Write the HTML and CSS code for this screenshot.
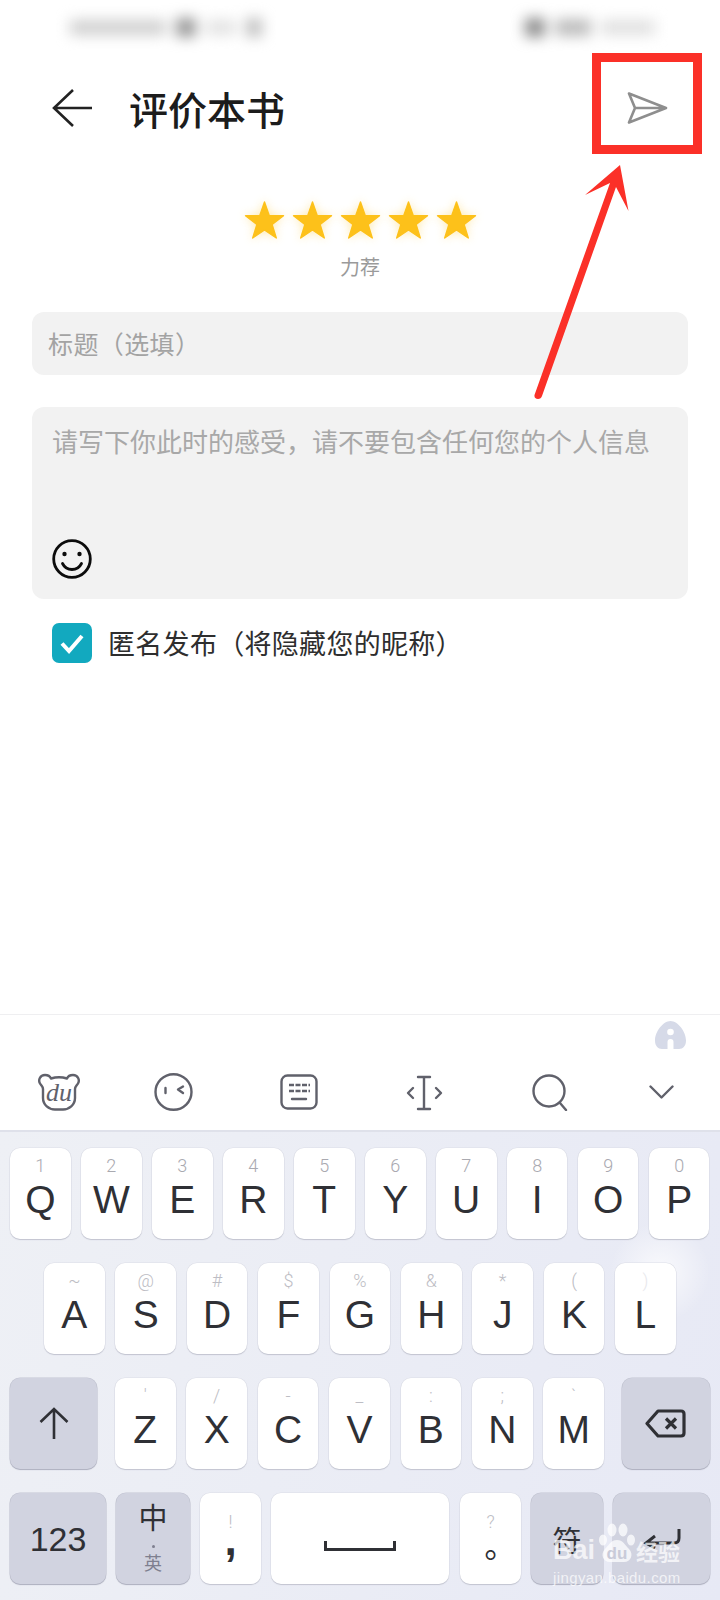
FILE: index.html
```html
<!DOCTYPE html>
<html lang="zh-CN">
<head>
    <meta charset="UTF-8">
    <meta name="viewport" content="width=device-width, initial-scale=1.0">
    <title>评价本书</title>
    <link rel="stylesheet" href="styles.css">
</head>
<body>
<div class="page">

    <!-- status bar, blurred in the source -->
    <div class="status">
        <div class="status-group">
            <span class="blob blob-a"></span><span class="blob blob-b"></span><span class="blob blob-c"></span><span class="blob blob-d"></span>
        </div>
        <div class="status-group">
            <span class="blob blob-e"></span><span class="blob blob-f"></span><span class="blob blob-g"></span>
        </div>
    </div>

    <header class="header">
        <svg class="back" viewBox="0 0 40 38"><path d="M21 1 2 19l19 18M2 19h38"/></svg>
        <h1 class="title">评价本书</h1>
        <svg class="send" viewBox="0 0 41 32"><path d="M2 1.5 39 16 2 30.500 8 16zM8 16h31"/></svg>
    </header>

    <section class="rating">
        <div class="stars">
            <svg class="star" viewBox="0 0 41 40"><path d="M20.500 2 25.200 15.500 39.500 15.800 28.100 24.500 32.300 38 20.500 30 8.700 38 12.900 24.500 1.500 15.800 15.800 15.500z"/></svg>
            <svg class="star" viewBox="0 0 41 40"><path d="M20.500 2 25.200 15.500 39.500 15.800 28.100 24.500 32.300 38 20.500 30 8.700 38 12.900 24.500 1.500 15.800 15.800 15.500z"/></svg>
            <svg class="star" viewBox="0 0 41 40"><path d="M20.500 2 25.200 15.500 39.500 15.800 28.100 24.500 32.300 38 20.500 30 8.700 38 12.900 24.500 1.500 15.800 15.800 15.500z"/></svg>
            <svg class="star" viewBox="0 0 41 40"><path d="M20.500 2 25.200 15.500 39.500 15.800 28.100 24.500 32.300 38 20.500 30 8.700 38 12.900 24.500 1.500 15.800 15.800 15.500z"/></svg>
            <svg class="star" viewBox="0 0 41 40"><path d="M20.500 2 25.200 15.500 39.500 15.800 28.100 24.500 32.300 38 20.500 30 8.700 38 12.900 24.500 1.500 15.800 15.800 15.500z"/></svg>
        </div>
        <div class="rating-label">力荐</div>
    </section>

    <div class="field-title">标题（选填）</div>

    <div class="field-body">
        <div class="body-hint">请写下你此时的感受，请不要包含任何您的个人信息</div>
        <svg class="smile" viewBox="0 0 40 40">
            <circle cx="20" cy="20" r="18.300"/>
            <circle class="eye" cx="12.500" cy="15" r="2.200"/>
            <circle class="eye" cx="27.500" cy="15" r="2.200"/>
            <path d="M10.500 24.500c2 4 5.500 6 9.500 6s7.500-2 9.500-6"/>
        </svg>
    </div>

    <div class="anon">
        <span class="checkbox"><svg viewBox="0 0 40 40"><path d="M10 20.500 17 28 30 13"/></svg></span>
        <span class="anon-text">匿名发布（将隐藏您的昵称）</span>
    </div>

    <!-- keyboard -->
    <div class="ime">
        <div class="ime-hint">
            <svg class="hint-icon" viewBox="0 0 31 28"><path class="hint-fill" d="M15.500 0C23 0 31 11 31 19.500 31 25 28 28 24 28h-5.500V21q0-3-3-3t-3 3v7H7c-4 0-7-3-7-8.500C0 11 8 0 15.500 0z"/><circle class="hint-hole" cx="15.500" cy="11" r="3.300"/></svg>
        </div>
        <div class="tools">
            <svg class="tool tool-du" viewBox="0 0 42 38">
                <path d="M7 2C2 2 0 7 2 10.500 3.500 13 5 13.500 5 16v9c0 7 6 11.500 12 11.500h8c6 0 12-4.500 12-11.500v-9c0-2.500 1.500-3 3-5.500C42 7 40 2 35 2c-3 0-5 1-6 3.500-5-1.500-11-1.500-16 0C12 3 10 2 7 2z"/>
                <text class="du-text" x="21" y="28" text-anchor="middle">du</text>
            </svg>
            <svg class="tool tool-face" viewBox="0 0 39 38">
                <ellipse cx="19.500" cy="19" rx="18" ry="17.800"/>
                <path d="M11.500 15v5M29 13.500 24 16.500 29 20"/>
            </svg>
            <svg class="tool tool-kb" viewBox="0 0 38 36">
                <rect x="1.500" y="1.500" width="35" height="33" rx="6"/>
                <path class="kb-keys" d="M9 11h5M15.500 11h5M22 11h5M28.500 11h1.500M9 17h5M15.500 17h5M22 17h5M28.500 17h1.500"/>
                <path d="M12 25h14"/>
            </svg>
            <svg class="tool tool-cursor" viewBox="0 0 39 36">
                <path d="M13 2h12M19 2v32M13 34h12M8 13 3 18l5 5M31 13l5 5-5 5"/>
            </svg>
            <svg class="tool tool-search" viewBox="0 0 37 37">
                <circle cx="17" cy="17" r="15.500"/>
                <path d="M28 29l6 7"/>
            </svg>
            <svg class="tool tool-down" viewBox="0 0 25 14"><path d="M1.500 1.500 12.500 12.500 23.500 1.500"/></svg>
        </div>

        <div class="keyboard">
            <div class="row">
                <div class="key"><span class="sub">1</span><span class="letter">Q</span></div>
                <div class="key"><span class="sub">2</span><span class="letter">W</span></div>
                <div class="key"><span class="sub">3</span><span class="letter">E</span></div>
                <div class="key"><span class="sub">4</span><span class="letter">R</span></div>
                <div class="key"><span class="sub">5</span><span class="letter">T</span></div>
                <div class="key"><span class="sub">6</span><span class="letter">Y</span></div>
                <div class="key"><span class="sub">7</span><span class="letter">U</span></div>
                <div class="key"><span class="sub">8</span><span class="letter">I</span></div>
                <div class="key"><span class="sub">9</span><span class="letter">O</span></div>
                <div class="key"><span class="sub">0</span><span class="letter">P</span></div>
            </div>
            <div class="row row-home">
                <div class="key"><span class="sub sub-sym">~</span><span class="letter">A</span></div>
                <div class="key"><span class="sub sub-sym">@</span><span class="letter">S</span></div>
                <div class="key"><span class="sub sub-sym">#</span><span class="letter">D</span></div>
                <div class="key"><span class="sub sub-sym">$</span><span class="letter">F</span></div>
                <div class="key"><span class="sub sub-sym">%</span><span class="letter">G</span></div>
                <div class="key"><span class="sub sub-sym">&amp;</span><span class="letter">H</span></div>
                <div class="key"><span class="sub sub-sym">*</span><span class="letter">J</span></div>
                <div class="key"><span class="sub sub-sym">(</span><span class="letter">K</span></div>
                <div class="key"><span class="sub sub-sym sub-faint">)</span><span class="letter">L</span></div>
            </div>
            <div class="row row-shift">
                <div class="key key-dark key-shift">
                    <svg class="shift-icon" viewBox="0 0 30 33"><path d="M15 32V2M1.500 15 15 2l13.500 13"/></svg>
                </div>
                <div class="key"><span class="sub sub-sym">'</span><span class="letter">Z</span></div>
                <div class="key"><span class="sub sub-sym">/</span><span class="letter">X</span></div>
                <div class="key"><span class="sub sub-sym">-</span><span class="letter">C</span></div>
                <div class="key"><span class="sub sub-sym">_</span><span class="letter">V</span></div>
                <div class="key"><span class="sub sub-sym">:</span><span class="letter">B</span></div>
                <div class="key"><span class="sub sub-sym">;</span><span class="letter">N</span></div>
                <div class="key"><span class="sub sub-sym">`</span><span class="letter">M</span></div>
                <div class="key key-dark key-back">
                    <svg class="back-icon" viewBox="0 0 41 29"><path d="M13 2h23q3 0 3 3v19q0 3-3 3H13L2 14.500z"/><path d="M21 9.500l10 10M31 9.500l-10 10"/></svg>
                </div>
            </div>
            <div class="row row-bottom">
                <div class="key key-dark key-num">123</div>
                <div class="key key-dark key-lang">
                    <span class="lang-zh">中</span>
                    <span class="lang-dot"></span>
                    <span class="lang-en">英</span>
                </div>
                <div class="key key-punct"><span class="sub sub-sym">!</span><span class="comma">,</span></div>
                <div class="key key-space">
                    <svg class="space-icon" viewBox="0 0 72 10"><path d="M1.500 0v8.500h69V0"/></svg>
                </div>
                <div class="key key-punct"><span class="sub sub-sym">?</span><span class="period">。</span></div>
                <div class="key key-dark key-sym">符</div>
                <div class="key key-dark key-enter">
                    <svg class="enter-icon" viewBox="0 0 38 20"><path d="M36 0v9q0 5-5 5H3M12 7 3 14l9 5"/></svg>
                </div>
            </div>
        </div>
    </div>

    <!-- annotations on top of the screenshot -->
    <div class="mark"></div>
    <svg class="mark-arrow" viewBox="530 160 105 245"><path d="M620 165 585 195 610 183 534.500 395Q534 399 538 399 541 399 542 396L616 187 628.500 211z"/></svg>

    <div class="watermark">
        <div class="wm-top">
            <span class="wm-bai">Bai</span>
            <svg class="wm-paw" viewBox="0 0 36 40">
                <ellipse cx="4" cy="17" rx="4" ry="5.500"/>
                <ellipse cx="13" cy="7" rx="4.500" ry="6.500"/>
                <ellipse cx="24" cy="7" rx="4.500" ry="6.500"/>
                <ellipse cx="32" cy="17" rx="4" ry="5.500"/>
                <path d="M18 17c6 0 8 5 12 9 5 5 2 13-5 13H11c-7 0-10-8-5-13 4-4 6-9 12-9z"/>
                <text class="wm-du" x="18" y="36" text-anchor="middle">du</text>
            </svg>
            <span class="wm-cn">经验</span>
        </div>
        <div class="wm-url">jingyan.baidu.com</div>
    </div>
</div>
</body>
</html>
```

FILE: styles.css
```css
* { margin: 0; padding: 0; box-sizing: border-box; }
body {
    background: #fff;
    font-family: "Noto Sans CJK SC", "Noto Sans", sans-serif;
}
svg { display: block; fill: none; }
.page {
    position: relative;
    width: 720px;
    height: 1600px;
    overflow: hidden;
    display: flex;
    flex-direction: column;
    background: #fff;
}

/* status bar */
.status {
    height: 54px;
    padding: 18px 65px 0 70px;
    display: flex;
    justify-content: space-between;
    filter: blur(7px);
}
.status-group { display: flex; gap: 10px; align-items: center; height: 19px; }
.blob { display: block; height: 15px; background: #cfcfcf; }
.blob-a { width: 96px; }
.blob-b { width: 20px; height: 19px; background: #989898; }
.blob-c { width: 30px; background: #e2e2e2; }
.blob-d { width: 16px; height: 19px; background: #c0c0c0; }
.blob-e { width: 20px; height: 19px; background: #8c8c8c; }
.blob-f { width: 36px; height: 17px; background: #bcbcbc; }
.blob-g { width: 54px; background: #e0e0e0; }

/* header */
.header {
    height: 108px;
    padding: 0 52px;
    display: flex;
    align-items: center;
}
.back { width: 40px; height: 38px; stroke: #222; stroke-width: 2.6; }
.title {
    margin-left: 37px;
    font-size: 39px;
    line-height: 50px;
    font-weight: 500;
    color: #1c1c1c;
}
.send {
    width: 41px;
    height: 32px;
    margin-left: auto;
    stroke: #8e8e8e;
    stroke-width: 2.6;
    stroke-linejoin: round;
}

/* rating */
.rating { margin-top: 38px; }
.stars { display: flex; justify-content: center; gap: 7px; }
.star {
    width: 41px;
    height: 40px;
    fill: #fdc11a;
    stroke: #fdc11a;
    stroke-width: 1.4;
    stroke-linejoin: round;
    filter: drop-shadow(0 0 5px rgba(253, 191, 20, 0.35));
}
.rating-label {
    margin-top: 17px;
    font-size: 20px;
    line-height: 20px;
    text-align: center;
    color: #9a9a9a;
}

/* form */
.field-title {
    margin: 35px 32px 0;
    height: 63px;
    padding-left: 16px;
    border-radius: 12px;
    background: #f2f2f2;
    font-size: 25px;
    line-height: 63px;
    letter-spacing: 0.4px;
    color: #a3a3a3;
}
.field-body {
    margin: 32px 32px 0;
    height: 192px;
    padding: 14px 20px 20px;
    border-radius: 12px;
    background: #f2f2f2;
    display: flex;
    flex-direction: column;
    justify-content: space-between;
}
.body-hint { font-size: 26px; line-height: 40px; color: #a8a8a8; white-space: nowrap; }
.smile { width: 40px; height: 40px; stroke: #0c0c0c; stroke-width: 2.8; stroke-linecap: round; }
.smile .eye { fill: #0c0c0c; stroke: none; }
.anon {
    margin: 24px 52px 0;
    height: 40px;
    display: flex;
    align-items: center;
    gap: 16px;
}
.checkbox {
    width: 40px;
    height: 40px;
    border-radius: 7px;
    background: #12a9bf;
}
.checkbox svg { stroke: #fff; stroke-width: 4; }
.anon-text { font-size: 27px; line-height: 40px; letter-spacing: 0.3px; color: #2e2e2e; white-space: nowrap; }

/* keyboard */
.ime {
    margin-top: auto;
    height: 586px;
    display: flex;
    flex-direction: column;
    border-top: 1px solid #efeff1;
}
.ime-hint { height: 33px; padding: 6px 34px 0 0; display: flex; justify-content: flex-end; }
.hint-icon { width: 31px; height: 28px; }
.hint-fill { fill: #d6dae8; }
.hint-hole { fill: #fff; }
.tools {
    margin-top: 25px;
    height: 38px;
    padding-left: 38px;
    display: grid;
    grid-template-columns: 116px 126px 125px 127px 117px 25px;
}
.tool { stroke: #60616b; stroke-width: 2.4; stroke-linecap: round; stroke-linejoin: round; }
.tool-du { width: 42px; height: 38px; }
.du-text {
    font-family: "Liberation Serif", serif;
    font-style: italic;
    font-size: 26px;
    fill: #60616b;
    stroke: none;
}
.tool-face { width: 39px; height: 38px; }
.tool-kb { width: 38px; height: 36px; margin-top: 1px; }
.kb-keys { stroke-width: 2.4; stroke-linecap: butt; }
.tool-cursor { width: 39px; height: 36px; margin-top: 2px; }
.tool-search { width: 37px; height: 37px; margin-top: 1px; }
.tool-down { width: 25px; height: 14px; margin-top: 12px; }

.keyboard {
    flex: 1;
    margin-top: 19px;
    padding: 16px 10px 0;
    border-top: 2px solid #dfe1ea;
    background:
        radial-gradient(circle 50px at 660px 140px, rgba(255, 255, 255, 0.75), rgba(255, 255, 255, 0)),
        linear-gradient(105deg, #eef0f5, #e7e9f5);
    display: flex;
    flex-direction: column;
    gap: 24px;
    font-family: "Liberation Sans", "Noto Sans CJK SC", sans-serif;
}
.row { display: flex; gap: 10.4px; height: 91px; }
.row-home { padding-left: 34px; gap: 10.8px; }
.row-shift { gap: 10.8px; }
.key {
    width: 60.6px;
    height: 91px;
    border-radius: 10px;
    background: #fff;
    box-shadow: 0 1px 1px #c2c4d0, 0 0 0 0.5px #dcdee7;
    display: flex;
    flex-direction: column;
    align-items: center;
    color: #2f3035;
}
.sub {
    margin-top: 9px;
    font-family: Roboto, sans-serif;
    font-weight: 300;
    font-size: 18px;
    line-height: 18px;
    color: #a9a9b0;
}
.sub-sym { color: #bdbdc4; }
.sub-faint { color: #e8e8ec; }
.letter { margin-top: 4.500px; font-size: 39px; line-height: 40px; }

.key-dark {
    background: #d1d3e0;
    box-shadow: 0 1px 1px #aeb0bf, 0 0 0 0.5px #c4c6d3;
    justify-content: center;
}
.key-shift { width: 87px; margin-right: 7.200px; }
.key-back { width: 88px; margin-left: 7.200px; }
.shift-icon { width: 30px; height: 33px; stroke: #2f3035; stroke-width: 2.6; }
.back-icon { width: 41px; height: 29px; stroke: #2f3035; stroke-width: 3.2; stroke-linejoin: round; }

.row-bottom { gap: 10px; }
.key-num { width: 96px; font-size: 34px; line-height: 40px; }
.key-lang { width: 74px; justify-content: flex-start; }
.lang-zh { margin-top: 11px; font-size: 29px; line-height: 31px; }
.lang-dot { width: 3px; height: 3px; margin-top: 10px; border-radius: 50%; background: #7e7f8f; }
.lang-en { margin-top: 6px; font-size: 18px; line-height: 20px; color: #7e7f8f; }
.key-punct { width: 61px; }
.key-punct .sub { margin-top: 20px; }
.comma { margin-top: -9px; font-size: 44px; font-weight: 700; line-height: 36px; }
.period {
    margin-top: 4px;
    font-family: "Noto Sans CJK TC", sans-serif;
    font-size: 32px;
    line-height: 36px;
}
.key-space { width: 178px; margin-right: 1px; justify-content: center; }
.space-icon { width: 72px; height: 10px; margin-top: 14px; stroke: #2f3035; stroke-width: 3; }
.key-sym { width: 72px; font-size: 29px; line-height: 40px; font-family: "Noto Sans CJK SC", sans-serif; }
.key-enter { width: 97px; }
.enter-icon { width: 38px; height: 20px; stroke: #2f3035; stroke-width: 3; }

/* red annotation */
.mark {
    position: absolute;
    left: 592px;
    top: 53px;
    width: 110px;
    height: 101px;
    border: 9px solid #fb3028;
}
.mark-arrow { position: absolute; left: 530px; top: 160px; width: 105px; height: 245px; fill: #fb3028; }

/* baidu watermark */
.watermark {
    position: absolute;
    left: 553px;
    top: 1522px;
    width: 130px;
    color: rgba(255, 255, 255, 0.72);
    font-family: "Liberation Sans", sans-serif;
}
.wm-top { display: flex; align-items: flex-end; height: 41px; }
.wm-bai { font-size: 27px; font-weight: 700; line-height: 26px; }
.wm-paw { width: 36px; height: 40px; margin-left: 4px; fill: rgba(255, 255, 255, 0.72); }
.wm-du { font-family: "Liberation Sans", sans-serif; font-size: 17px; font-weight: 700; fill: #c9cbd9; }
.wm-cn { margin-left: 1px; font-family: "Noto Sans CJK SC", sans-serif; font-size: 22px; line-height: 26px; font-weight: 700; }
.wm-url { margin-top: 6px; font-size: 15px; line-height: 18px; letter-spacing: 0.4px; white-space: nowrap; }
```
